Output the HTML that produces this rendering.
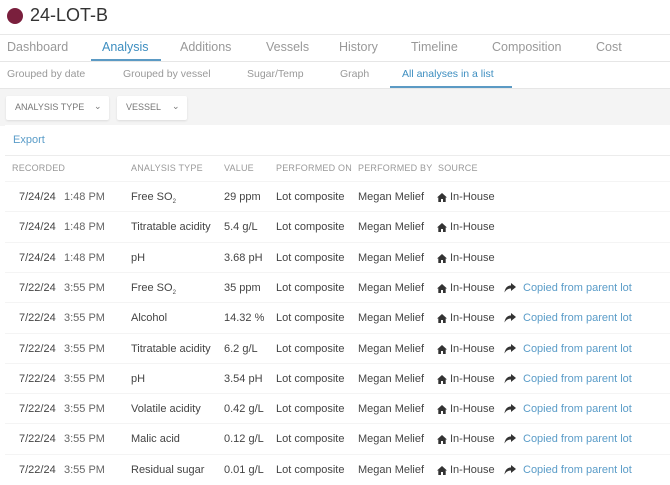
<!DOCTYPE html><html><head><style>
body{margin:0;width:670px;height:482px;overflow:hidden;background:#fff;font-family:"Liberation Sans",sans-serif;color:#333;position:relative}
.a{position:absolute;white-space:nowrap}
.t{font-size:12.5px;color:#999;top:40px}
.s{font-size:10.5px;color:#999;top:68px}
.h{font-size:9px;color:#999;top:163px;letter-spacing:.2px}
.r{position:absolute;left:5px;width:665px;height:30px;border-top:1px solid #f4f4f4;font-size:11px;color:#444}
.r span,.r svg{position:absolute;top:9px;white-space:nowrap}
.lk{color:#5a9cc8}
</style></head><body>
<div class="a" style="left:7px;top:8px;width:16px;height:16px;border-radius:50%;background:#7a1f3d"></div>
<div class="a" style="left:30px;top:5px;font-size:18px;color:#333">24-LOT-B</div>
<div class="a" style="left:0;top:34px;width:670px;border-top:1px solid #e8e8e8"></div>
<div class="a t" style="left:7px">Dashboard</div>
<div class="a t" style="left:102px;color:#3d8ec0">Analysis</div>
<div class="a" style="left:91px;top:59px;width:70px;height:2px;background:#5b9ac4"></div>
<div class="a t" style="left:180px">Additions</div>
<div class="a t" style="left:266px">Vessels</div>
<div class="a t" style="left:339px">History</div>
<div class="a t" style="left:411px">Timeline</div>
<div class="a t" style="left:492px">Composition</div>
<div class="a t" style="left:596px">Cost</div>
<div class="a" style="left:0;top:61px;width:670px;border-top:1px solid #e6e6e6"></div>
<div class="a s" style="left:7px">Grouped by date</div>
<div class="a s" style="left:123px">Grouped by vessel</div>
<div class="a s" style="left:247px">Sugar/Temp</div>
<div class="a s" style="left:340px">Graph</div>
<div class="a s" style="left:402px;color:#3d8ec0">All analyses in a list</div>
<div class="a" style="left:390px;top:86px;width:122px;height:2px;background:#5b9ac4"></div>
<div class="a" style="left:0;top:88px;width:670px;height:37px;background:#f4f4f4;border-top:1px solid #e6e6e6"></div>
<div class="a" style="left:6px;top:96px;width:103px;height:24px;background:#fff;border-radius:2px;box-shadow:0 1px 2px rgba(0,0,0,.1)"></div>
<div class="a" style="left:15px;top:102px;font-size:9px;color:#777">ANALYSIS TYPE</div>
<div class="a" style="left:94px;top:101px;font-size:9px;color:#777">&#8964;</div>
<div class="a" style="left:117px;top:96px;width:70px;height:24px;background:#fff;border-radius:2px;box-shadow:0 1px 2px rgba(0,0,0,.1)"></div>
<div class="a" style="left:126px;top:102px;font-size:9px;color:#777">VESSEL</div>
<div class="a" style="left:172px;top:101px;font-size:9px;color:#777">&#8964;</div>
<div class="a" style="left:5px;top:125px;width:665px;height:357px;background:#fff"></div>
<div class="a" style="left:13px;top:134px;font-size:11px;color:#5a9cc8">Export</div>
<div class="a" style="left:5px;top:155px;width:665px;border-top:1px solid #ececec"></div>
<div class="a h" style="left:12px">RECORDED</div>
<div class="a h" style="left:131px">ANALYSIS TYPE</div>
<div class="a h" style="left:224px">VALUE</div>
<div class="a h" style="left:276px">PERFORMED ON</div>
<div class="a h" style="left:358px">PERFORMED BY</div>
<div class="a h" style="left:438px">SOURCE</div>
<div id="rows"></div>
<script>
var home='<svg style="left:432px;top:11px" width="10" height="9" viewBox="0 0 10 9"><path d="M5 0L0 4.5h1.3V9h2.7V6h2v3h2.7V4.5H10z" fill="#333"/></svg>';
var arr='<svg style="left:499px;top:10px" width="12" height="10" viewBox="0 0 12 10"><path d="M7 0l5 4-5 4V5.5C4 5.5 2 6.5 0.5 9.5 1 5 3.5 2.5 7 2.5z" fill="#333"/></svg>';
var d=[["7/24/24","1:48 PM","Free SO<sub style='font-size:6px'>2</sub>","29 ppm",0],["7/24/24","1:48 PM","Titratable acidity","5.4 g/L",0],["7/24/24","1:48 PM","pH","3.68 pH",0],["7/22/24","3:55 PM","Free SO<sub style='font-size:6px'>2</sub>","35 ppm",1],["7/22/24","3:55 PM","Alcohol","14.32 %",1],["7/22/24","3:55 PM","Titratable acidity","6.2 g/L",1],["7/22/24","3:55 PM","pH","3.54 pH",1],["7/22/24","3:55 PM","Volatile acidity","0.42 g/L",1],["7/22/24","3:55 PM","Malic acid","0.12 g/L",1],["7/22/24","3:55 PM","Residual sugar","0.01 g/L",1]];
var h="";d.forEach(function(r,i){h+='<div class="r" style="top:'+(181+i*30.3)+'px"><span style="left:14px">'+r[0]+'</span><span style="left:59px;color:#666">'+r[1]+'</span><span style="left:126px">'+r[2]+'</span><span style="left:219px">'+r[3]+'</span><span style="left:271px">Lot composite</span><span style="left:353px">Megan Melief</span>'+home+'<span style="left:445px">In-House</span>'+(r[4]?arr+'<span class="lk" style="left:518px">Copied from parent lot</span>':'')+'</div>';});
document.getElementById("rows").innerHTML=h;
</script>
</body></html>
